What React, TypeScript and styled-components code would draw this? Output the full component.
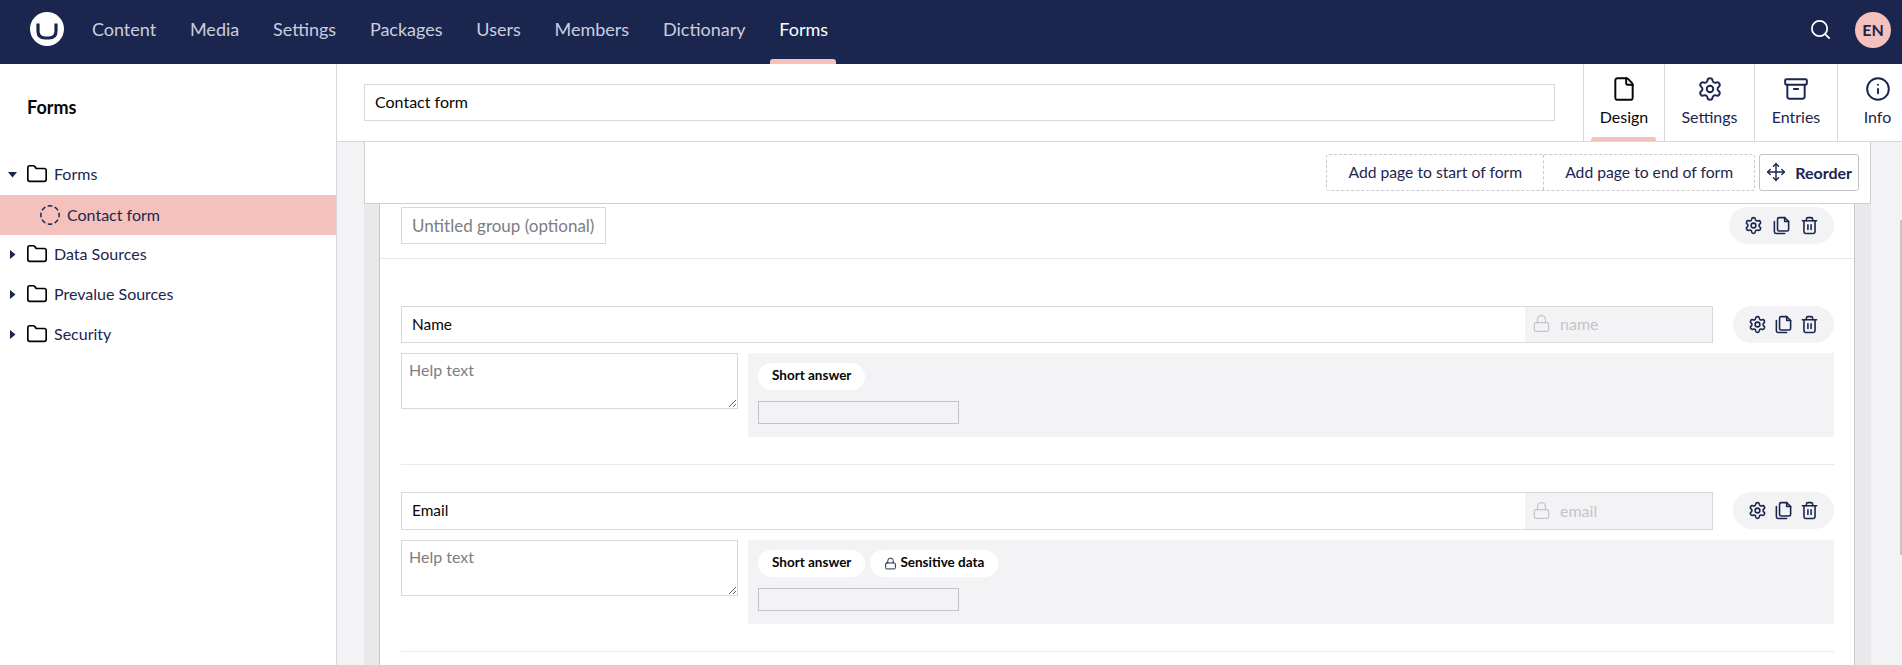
import styled, { createGlobalStyle } from "styled-components";
import { Archive, CircleDashed, File, Folder, Info, Lock, Move, Search, Settings, Trash2 } from "lucide-react";

const GlobalStyle = createGlobalStyle`
  html, body {
    margin: 0;
    height: 100%;
    overflow: hidden;
    background: #ffffff;
    color: #1b264f;
    font-family: Lato, "Open Sans", sans-serif;
  }
  * {
    box-sizing: border-box;
  }
`;

const navItems = ["Content", "Media", "Settings", "Packages", "Users", "Members", "Dictionary", "Forms"];

// the last tab runs off the right edge of the window
const tabs = [
  { label: "Design", icon: File, width: 81, active: true },
  { label: "Settings", icon: Settings, width: 90, active: false },
  { label: "Entries", icon: Archive, width: 83, active: false },
  { label: "Info", icon: Info, width: 80, active: false },
];

const fields = [
  { name: "Name", alias: "name", sensitive: false },
  { name: "Email", alias: "email", sensitive: true },
];

function Logo() {
  return (
    <svg width="34" height="34" viewBox="0 0 34 34">
      <circle cx="17" cy="17" r="17" fill="#ffffff" />
      <path d="M8 11.5 L8 19 Q8 26 15 26 L19 26 Q26 26 26 19 L26 11.5" fill="none" stroke="#1b264f" strokeWidth="3.2" />
    </svg>
  );
}

function DuplicateIcon() {
  return (
    <svg width="19" height="19" viewBox="0 0 24 24" fill="none" stroke="#1b264f" strokeWidth="2" strokeLinejoin="round" strokeLinecap="round">
      <path d="M9 2h7l5 5v10a2 2 0 0 1-2 2H9a2 2 0 0 1-2-2V4a2 2 0 0 1 2-2z" />
      <path d="M16 2v5h5" />
      <path d="M3 7v13a2 2 0 0 0 2 2h11" />
    </svg>
  );
}

function Caret({ open }: { open?: boolean }) {
  return (
    <CaretBox>
      <svg width="9" height="9" viewBox="0 0 9 9">
        <polygon points={open ? "0,2 9,2 4.5,7.5" : "2,0 7.5,4.5 2,9"} fill="#1b264f" />
      </svg>
    </CaretBox>
  );
}

function Actions({ wide }: { wide?: boolean }) {
  return (
    <ActionPill $wide={wide}>
      <Settings size={19} strokeWidth={2} />
      <DuplicateIcon />
      <Trash2 size={19} strokeWidth={2} />
    </ActionPill>
  );
}

function TreeItem({ label, open }: { label: string; open?: boolean }) {
  return (
    <TreeRow>
      <Caret open={open} />
      <Folder size={22} strokeWidth={1.8} color="#000000" />
      <span>{label}</span>
    </TreeRow>
  );
}

export default function App() {
  return (
    <>
      <GlobalStyle />
      <Page>
        <TopBar>
          <LogoBox>
            <Logo />
          </LogoBox>
          <Nav>
            {navItems.map((item) => (
              <NavItem key={item} $active={item === "Forms"}>
                {item}
              </NavItem>
            ))}
          </Nav>
          <TopRight>
            <SearchBox>
              <Search size={23} strokeWidth={1.8} color="#ffffff" />
            </SearchBox>
            <Avatar>EN</Avatar>
          </TopRight>
        </TopBar>
        <Body>
          <Sidebar>
            <SidebarTitle>Forms</SidebarTitle>
            <TreeItem label="Forms" open />
            <SelectedRow>
              <CircleDashed size={22} strokeWidth={1.6} />
              <span>Contact form</span>
            </SelectedRow>
            <TreeItem label="Data Sources" />
            <TreeItem label="Prevalue Sources" />
            <TreeItem label="Security" />
          </Sidebar>
          <Main>
            <EditorHeader>
              <NameArea>
                <TitleInput defaultValue="Contact form" />
              </NameArea>
              {tabs.map((tab) => (
                <Tab key={tab.label} $width={tab.width} $active={tab.active}>
                  <tab.icon size={26} strokeWidth={1.8} />
                  <span>{tab.label}</span>
                </Tab>
              ))}
            </EditorHeader>
            <Canvas>
              <Toolbar>
                <DashedGroup>
                  <AddPage>Add page to start of form</AddPage>
                  <AddPage>Add page to end of form</AddPage>
                </DashedGroup>
                <ReorderButton>
                  <Move size={20} strokeWidth={1.7} />
                  <span>Reorder</span>
                </ReorderButton>
              </Toolbar>
              <PageBand>
                <GroupCard>
                  <GroupHeader>
                    <GroupInput placeholder="Untitled group (optional)" />
                    <Actions wide />
                  </GroupHeader>
                  <FieldList>
                    {fields.map((field) => (
                      <Field key={field.alias}>
                        <FieldTop>
                          <NameBox>
                            <FieldName defaultValue={field.name} />
                            <AliasBox>
                              <Lock size={19} strokeWidth={1.5} />
                              <span>{field.alias}</span>
                            </AliasBox>
                          </NameBox>
                          <Actions />
                        </FieldTop>
                        <FieldBottom>
                          <HelpText placeholder="Help text" />
                          <Preview>
                            <PillRow>
                              <Pill>Short answer</Pill>
                              {field.sensitive && (
                                <Pill>
                                  <Lock size={13} strokeWidth={1.8} />
                                  Sensitive data
                                </Pill>
                              )}
                            </PillRow>
                            <PreviewInput />
                          </Preview>
                        </FieldBottom>
                      </Field>
                    ))}
                  </FieldList>
                </GroupCard>
              </PageBand>
              <ScrollThumb />
            </Canvas>
          </Main>
        </Body>
      </Page>
    </>
  );
}

const Page = styled.div`
  display: flex;
  flex-direction: column;
  height: 100vh;
  overflow: hidden;
`;

const TopBar = styled.header`
  display: flex;
  align-items: stretch;
  flex: none;
  height: 64px;
  background: #1b264f;
`;

const LogoBox = styled.div`
  display: flex;
  align-items: center;
  padding: 0 11px 6px 30px;
  svg {
    display: block;
  }
`;

const Nav = styled.nav`
  display: flex;
`;

const NavItem = styled.a<{ $active?: boolean }>`
  position: relative;
  display: flex;
  align-items: center;
  padding: 0 16.9px 6px;
  font-size: 18px;
  color: ${(p) => (p.$active ? "#ffffff" : "#c9cede")};
  ${(p) =>
    p.$active &&
    `
    &::after {
      content: "";
      position: absolute;
      left: 8px;
      right: 9px;
      bottom: 0;
      height: 5px;
      border-radius: 3px 3px 0 0;
      background: #f5c1bc;
    }
  `}
`;

const TopRight = styled.div`
  display: flex;
  align-items: center;
  gap: 23px;
  margin-left: auto;
  padding: 0 11px 4px 0;
`;

const SearchBox = styled.div`
  display: flex;
  margin-top: -1px;
`;

const Avatar = styled.div`
  display: flex;
  align-items: center;
  justify-content: center;
  width: 36px;
  height: 36px;
  padding-bottom: 1px;
  border-radius: 50%;
  background: #f5c1bc;
  color: #1b264f;
  font-size: 16px;
  font-weight: 700;
`;

const Body = styled.div`
  display: flex;
  flex: 1;
  min-height: 0;
`;

const Sidebar = styled.aside`
  flex: none;
  width: 337px;
  border-right: 1px solid #d8d7d9;
  background: #ffffff;
`;

const SidebarTitle = styled.div`
  height: 91px;
  padding: 32px 0 0 27px;
  font-size: 18px;
  line-height: 22px;
  font-weight: 700;
  color: #060606;
`;

const TreeRow = styled.div`
  display: flex;
  align-items: center;
  height: 40px;
  font-size: 16px;
  color: #1b264f;
  padding: 0 0 2px 8px;
  svg {
    flex: none;
  }
  > span {
    margin: 0 0 2px 6px;
  }
`;

const CaretBox = styled.div`
  display: flex;
  width: 18px;
`;

const SelectedRow = styled(TreeRow)`
  padding: 0 0 0 39px;
  background: #f5c1bc;
`;

const Main = styled.main`
  display: flex;
  flex-direction: column;
  flex: 1;
  min-width: 0;
`;

const EditorHeader = styled.div`
  display: flex;
  flex: none;
  height: 78px;
  border-bottom: 1px solid #d8d7d9;
  overflow: hidden;
`;

const NameArea = styled.div`
  flex: none;
  width: 1246px;
  padding: 20px 28px 0 27px;
`;

const TitleInput = styled.input`
  display: block;
  width: 100%;
  height: 37px;
  padding: 0 10px 2px;
  border: 1px solid #d8d7d9;
  outline: none;
  font: 16px Lato, sans-serif;
  color: #060606;
`;

const Tab = styled.div<{ $width: number; $active?: boolean }>`
  position: relative;
  display: flex;
  flex-direction: column;
  align-items: center;
  flex: none;
  width: ${(p) => p.$width}px;
  padding-top: 12px;
  gap: 5px;
  border-left: 1px solid #d8d7d9;
  font-size: 16px;
  line-height: 19px;
  color: ${(p) => (p.$active ? "#060606" : "#1b264f")};
  ${(p) =>
    p.$active &&
    `
    &::after {
      content: "";
      position: absolute;
      left: 7px;
      right: 8px;
      bottom: 0;
      height: 4px;
      border-radius: 3px 3px 0 0;
      background: #f5c1bc;
    }
  `}
`;

const Canvas = styled.div`
  position: relative;
  flex: 1;
  min-height: 0;
  padding: 0 31px 0 27px;
  background: #f3f3f5;
  overflow: hidden;
`;

const Toolbar = styled.div`
  display: flex;
  align-items: center;
  justify-content: flex-end;
  gap: 4px;
  height: 62px;
  padding: 0 11px 0 0;
  background: #ffffff;
  border: 1px solid #cfcfd1;
  border-top: none;
`;

const DashedGroup = styled.div`
  display: flex;
  height: 37px;
  border: 1px dashed #c9c9cc;
  border-radius: 3px;
`;

const AddPage = styled.div`
  display: flex;
  align-items: center;
  justify-content: center;
  font-size: 15.7px;
  padding: 0 21px 2px;
  & + & {
    border-left: 1px dashed #c9c9cc;
  }
`;

const ReorderButton = styled.div`
  display: flex;
  align-items: center;
  gap: 9px;
  height: 37px;
  padding: 0 6px 1px;
  border: 1px solid #c4c4c8;
  border-radius: 3px;
  font-size: 16px;
  font-weight: 700;
`;

const PageBand = styled.div`
  padding: 0 16px 0 15px;
  background: #e9e9eb;
`;

const GroupCard = styled.div`
  min-height: 500px;
  background: #ffffff;
  border-left: 1px solid #c9c9cc;
  border-right: 1px solid #c9c9cc;
`;

const GroupHeader = styled.div`
  display: flex;
  justify-content: space-between;
  padding: 3px 20px 14px 21px;
  border-bottom: 1px solid #e9e9eb;
`;

const GroupInput = styled.input`
  width: 205px;
  height: 37px;
  padding: 0 10px;
  border: 1px solid #d8d7d9;
  outline: none;
  font: 17px Lato, sans-serif;
  &::placeholder {
    color: #7d7d84;
    opacity: 1;
  }
`;

const ActionPill = styled.div<{ $wide?: boolean }>`
  display: flex;
  align-items: center;
  justify-content: center;
  gap: ${(p) => (p.$wide ? 9 : 7)}px;
  flex: none;
  width: ${(p) => (p.$wide ? 105 : 101)}px;
  height: 37px;
  border-radius: 19px;
  background: #f3f3f5;
  color: #1b264f;
`;

const FieldList = styled.div`
  padding: 47px 20px 0 21px;
`;

const Field = styled.div`
  padding-bottom: 27px;
  margin-bottom: 27px;
  border-bottom: 1px solid #e9e9eb;
`;

const FieldTop = styled.div`
  display: flex;
  gap: 20px;
  height: 37.4px;
`;

const NameBox = styled.div`
  display: flex;
  flex: 1;
  border: 1px solid #d8d7d9;
`;

const FieldName = styled.input`
  flex: 1;
  min-width: 0;
  padding: 0 10px 2px;
  border: none;
  outline: none;
  font: 15.4px Lato, sans-serif;
  color: #060606;
`;

const AliasBox = styled.div`
  display: flex;
  align-items: center;
  gap: 9px;
  flex: none;
  width: 187px;
  padding: 0 0 2px 7px;
  background: #f3f3f5;
  color: #c4c4c8;
  font-size: 16px;
`;

const FieldBottom = styled.div`
  display: flex;
  gap: 10px;
  margin-top: 10px;
`;

const HelpText = styled.textarea`
  display: block;
  flex: none;
  width: 337px;
  height: 56px;
  padding: 6px 7px;
  border: 1px solid #d8d7d9;
  outline: none;
  font: 16px Lato, sans-serif;
  &::placeholder {
    color: #7d7d84;
    opacity: 1;
  }
`;

const Preview = styled.div`
  flex: 1;
  height: 84px;
  padding: 10px;
  background: #f3f3f5;
`;

const PillRow = styled.div`
  display: flex;
  gap: 5px;
`;

const Pill = styled.div`
  display: flex;
  align-items: center;
  gap: 3px;
  height: 27px;
  padding: 0 14px 3px;
  border-radius: 14px;
  background: #ffffff;
  color: #060606;
  font-size: 13.5px;
  font-weight: 700;
  svg {
    color: #1b264f;
    margin-top: 4px;
  }
`;

const PreviewInput = styled.div`
  width: 201px;
  height: 23px;
  margin-top: 11px;
  border: 1px solid #c4c4c8;
  background: #f3f3f5;
`;

const ScrollThumb = styled.div`
  position: absolute;
  top: 78px;
  right: 0;
  width: 2px;
  height: 335px;
  background: #c4c4c4;
`;
